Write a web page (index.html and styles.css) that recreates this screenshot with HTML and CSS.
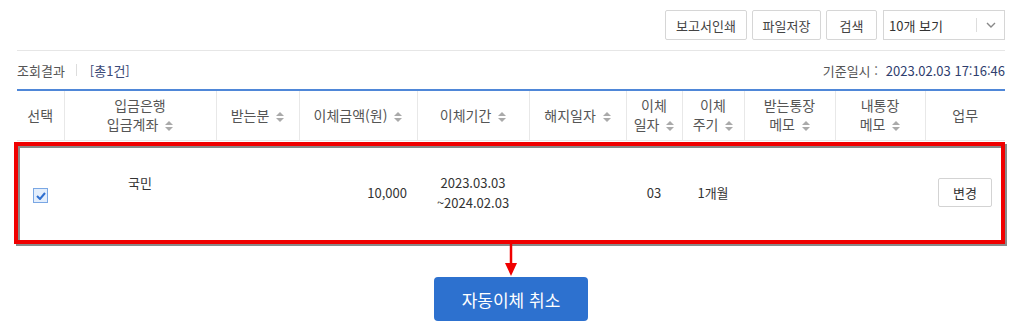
FILE: index.html
```html
<!DOCTYPE html>
<html lang="ko">
<head>
    <meta charset="UTF-8">
    <title>자동이체 조회</title>
    <link rel="stylesheet" href="styles.css">
</head>
<body>
    <div class="page">
        <div class="toolbar">
            <button class="tool-btn w-print">보고서인쇄</button>
            <button class="tool-btn w-save">파일저장</button>
            <button class="tool-btn w-search">검색</button>
            <div class="select">
                <span>10개 보기</span>
                <span class="select-arrow">
                    <svg width="10" height="6" viewBox="0 0 10 6"><path d="M1 1l4 4 4-4" fill="none" stroke="#888" stroke-width="1.4"/></svg>
                </span>
            </div>
        </div>

        <div class="summary">
            <div class="summary-left">
                <span class="label">조회결과</span>
                <span class="sep"></span>
                <span class="count">[총1건]</span>
            </div>
            <div class="summary-right">
                <span class="label">기준일시 :</span>
                <span class="stamp">2023.02.03 17:16:46</span>
            </div>
        </div>

        <div class="table-wrap">
            <table class="grid">
                <colgroup>
                    <col style="width:47px"><col style="width:152px"><col style="width:83px">
                    <col style="width:118px"><col style="width:112px"><col style="width:97px">
                    <col style="width:56px"><col style="width:62px"><col style="width:91px">
                    <col style="width:90px"><col style="width:80px">
                </colgroup>
                <thead>
                    <tr>
                        <th>선택</th>
                        <th>입금은행<br>입금계좌 <i class="sort"></i></th>
                        <th>받는분 <i class="sort"></i></th>
                        <th>이체금액(원) <i class="sort"></i></th>
                        <th>이체기간 <i class="sort"></i></th>
                        <th>해지일자 <i class="sort"></i></th>
                        <th>이체<br>일자 <i class="sort"></i></th>
                        <th>이체<br>주기 <i class="sort"></i></th>
                        <th>받는통장<br>메모 <i class="sort"></i></th>
                        <th>내통장<br>메모 <i class="sort"></i></th>
                        <th>업무</th>
                    </tr>
                </thead>
                <tbody>
                    <tr>
                        <td><span class="check"><svg width="10" height="8" viewBox="0 0 10 8"><path d="M1 4l3 3 5-6" fill="none" stroke="#2f6fd0" stroke-width="2"/></svg></span></td>
                        <td class="bank">국민<br>&nbsp;</td>
                        <td></td>
                        <td class="num">10,000</td>
                        <td>2023.03.03<br>~2024.02.03</td>
                        <td></td>
                        <td>03</td>
                        <td>1개월</td>
                        <td></td>
                        <td></td>
                        <td><button class="small-btn">변경</button></td>
                    </tr>
                </tbody>
            </table>
            <div class="highlight"></div>
            <svg class="arrow" width="16" height="34" viewBox="0 0 16 34">
                <path d="M8 0v22" stroke="#f00000" stroke-width="2.5"/>
                <path d="M2 19h12l-6 13z" fill="#f00000"/>
            </svg>
        </div>

        <div class="actions">
            <button class="primary-btn">자동이체 취소</button>
        </div>
    </div>
</body>
</html>
```

FILE: styles.css
```css
* {
    margin: 0;
    padding: 0;
    box-sizing: border-box;
}

body {
    font-family: 'Noto Sans CJK KR', 'Noto Sans', sans-serif;
    background-color: #ffffff;
    color: #333333;
    font-size: 13px;
}

.page {
    padding: 0 19px 0 17px;
}

/* Toolbar */
.toolbar {
    display: flex;
    justify-content: flex-end;
    gap: 5px;
    padding: 10px 0 10px;
    border-bottom: 1px solid #e6e6e6;
}

.tool-btn {
    height: 30px;
    font-family: inherit;
    font-size: 13px;
    color: #444444;
    background: #ffffff;
    border: 1px solid #d6d6d6;
    border-radius: 2px;
}

.w-print { width: 82px; }
.w-save { width: 69px; }
.w-search { width: 51px; }

.select {
    display: flex;
    align-items: center;
    justify-content: space-between;
    width: 122px;
    height: 30px;
    margin-left: 1px;
    padding-left: 5px;
    border: 1px solid #d6d6d6;
    font-size: 13px;
    color: #333333;
}

.select-arrow {
    display: flex;
    align-items: center;
    height: 14px;
    padding: 0 8px 0 9px;
    border-left: 1px solid #dddddd;
}

/* Summary line */
.summary {
    display: flex;
    justify-content: space-between;
    align-items: center;
    height: 38px;
}

.summary-left,
.summary-right {
    display: flex;
    align-items: center;
}

.summary .label {
    color: #555555;
}

.sep {
    width: 1px;
    height: 12px;
    background: #dddddd;
    margin: 0 13px 0 11px;
}

.count {
    color: #3b4a77;
}

.stamp {
    margin-left: 8px;
    color: #2f3e6e;
}

/* Table */
.table-wrap {
    position: relative;
}

.grid {
    width: 100%;
    table-layout: fixed;
    border-collapse: collapse;
    border-top: 2px solid #4f87d8;
}

.grid th {
    height: 50px;
    font-weight: normal;
    font-size: 14px;
    line-height: 19px;
    color: #555555;
    border-left: 1px solid #e8e8e8;
    border-bottom: 1px solid #e8e8e8;
}

.grid th:first-child {
    border-left: none;
}

.sort {
    position: relative;
    display: inline-block;
    width: 8px;
    height: 10px;
    margin-left: 3px;
    vertical-align: -1px;
}

.sort::before,
.sort::after {
    content: "";
    position: absolute;
    left: 0;
    border-left: 4px solid transparent;
    border-right: 4px solid transparent;
}

.sort::before {
    top: 0;
    border-bottom: 4px solid #aaaaaa;
}

.sort::after {
    bottom: 0;
    border-top: 4px solid #aaaaaa;
}

.grid td {
    height: 105px;
    text-align: center;
    font-size: 13px;
    line-height: 20px;
    color: #333333;
}

.grid td.num {
    text-align: right;
    padding-right: 10px;
}

.check {
    display: inline-flex;
    align-items: center;
    justify-content: center;
    width: 15px;
    height: 15px;
    margin-top: 4px;
    border: 1px solid #7aa7e4;
    background: #e3eefc;
    vertical-align: middle;
}

.small-btn {
    width: 54px;
    height: 29px;
    font-family: inherit;
    font-size: 13px;
    color: #333333;
    background: #ffffff;
    border: 1px solid #d3d3d3;
    border-radius: 2px;
}

/* Red highlight overlay */
.highlight {
    position: absolute;
    left: -3px;
    right: 0;
    top: 53px;
    height: 102px;
    border: 4px solid #f00000;
    box-shadow: 2px 2px 0 #8a8a8a, inset 2px 2px 0 #8a8a8a;
}

.arrow {
    position: absolute;
    left: 486px;
    top: 155px;
}

/* Bottom action */
.actions {
    display: flex;
    justify-content: center;
    padding-top: 32px;
}

.primary-btn {
    width: 154px;
    height: 44px;
    font-family: inherit;
    font-size: 17px;
    color: #ffffff;
    background: #2d71cf;
    border: none;
    border-radius: 4px;
}
```
